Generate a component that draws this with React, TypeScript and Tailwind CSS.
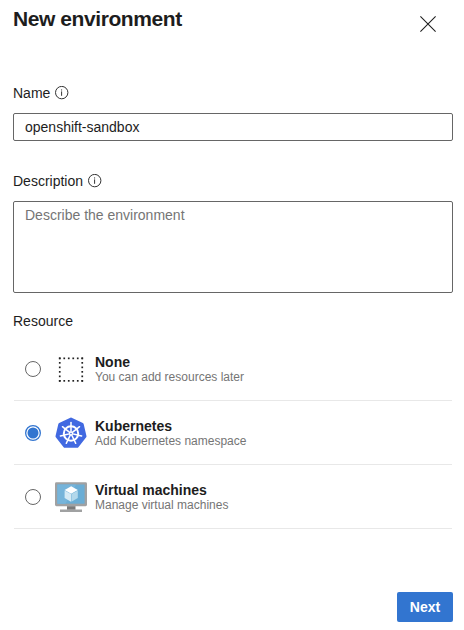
import React, { useState } from 'react';

function InfoIcon() {
  return (
    <svg className="ml-[5px] h-[14px] w-[14px]" viewBox="0 0 14 14" fill="none">
      <circle cx="6.7" cy="6.6" r="6.2" stroke="#333" strokeWidth="1" />
      <path d="M6.6 5.4v4.4" stroke="#333" strokeWidth="1" />
      <path d="M6.6 3.4v1.1" stroke="#333" strokeWidth="1" />
    </svg>
  );
}

function RadioMark({ checked }: { checked: boolean }) {
  return (
    <svg className="h-4 w-4" viewBox="0 0 16 16" fill="none">
      {checked ? (
        <>
          <circle cx="8" cy="8" r="7.35" stroke="#3275d0" strokeWidth="1.3" />
          <circle cx="8" cy="8" r="5.5" fill="#3275d0" />
        </>
      ) : (
        <circle cx="8" cy="8" r="7.5" stroke="#666" strokeWidth="1" />
      )}
    </svg>
  );
}

function NoneIcon() {
  return (
    <svg className="h-8 w-8" viewBox="0 0 32 32" fill="#222">
      {[0, 1, 2, 3, 4, 5].map((i) => {
        const p = 3.9 + i * 4.5;
        return (
          <g key={i}>
            <rect x={p} y="4.5" width="1.7" height="1.7" />
            <rect x={p} y="27" width="1.7" height="1.7" />
            <rect x="3.9" y={p + 0.6} width="1.7" height="1.7" />
            <rect x="26.4" y={p + 0.6} width="1.7" height="1.7" />
          </g>
        );
      })}
    </svg>
  );
}

function KubernetesIcon() {
  return (
    <svg className="h-8 w-8" viewBox="0 0 32 32" fill="none">
      <path
        d="M16 2 27.2 7.3 30 19.4 22.2 29.3H9.8L2 19.4 4.8 7.3Z"
        fill="#4169e1"
        stroke="#4169e1"
        strokeWidth="3"
        strokeLinejoin="round"
      />
      <g stroke="#fff" strokeLinecap="round">
        <circle cx="16" cy="16.5" r="7.2" strokeWidth="2" />
        {[0, 1, 2, 3, 4, 5, 6].map((i) => (
          <g key={i} transform={`rotate(${(i * 360) / 7} 16 16.5)`}>
            <path d="M16 16V9.5" strokeWidth="1.5" />
            <path d="M16 9V5.6" strokeWidth="1.5" />
          </g>
        ))}
      </g>
      <circle cx="16" cy="16.5" r="2" fill="#fff" />
      <circle cx="16" cy="16.5" r="0.8" fill="#4169e1" />
    </svg>
  );
}

function MachineIcon() {
  return (
    <svg className="h-8 w-8" viewBox="0 0 32 32">
      <rect x="0" y="1.2" width="32" height="24" rx="1.4" fill="#a0a1a2" />
      <rect x="2.4" y="3.5" width="27.2" height="19.2" fill="#6aadd5" />
      <path d="M2.4 3.5h18.7L10.5 22.7H2.4Z" fill="#76b4da" />
      <path d="M12 25.2h8.5v3.6H12Z" fill="#7a7a7a" />
      <path d="M5 28.5h22V31H5Z" fill="#a0a1a2" />
      <path d="m16.2 5.3 6.6 3.6-6.6 3.8-6.6-3.8Z" fill="#fff" />
      <path d="M9.6 9.4 16 13.1v7.6L9.6 17.1Z" fill="#d5eaf5" />
      <path d="M22.8 9.4 16.4 13.1v7.6l6.4-3.6Z" fill="#b3d8eb" />
    </svg>
  );
}

const resources = [
  { id: 'none', title: 'None', detail: 'You can add resources later', Icon: NoneIcon },
  { id: 'kubernetes', title: 'Kubernetes', detail: 'Add Kubernetes namespace', Icon: KubernetesIcon },
  { id: 'vm', title: 'Virtual machines', detail: 'Manage virtual machines', Icon: MachineIcon },
];

export default function App() {
  const [name, setName] = useState('openshift-sandbox');
  const [selected, setSelected] = useState('kubernetes');

  return (
    <main className="flex h-[630px] w-[464px] flex-col bg-white pr-[11px] pl-[13px] font-['Liberation_Sans',Arial,sans-serif] text-sm text-[#1d1d1d]">
      <header className="flex h-[83px] justify-between">
        <h1 className="pt-[5px] text-[21px] leading-7 font-bold tracking-[-0.02em]">New environment</h1>
        <button aria-label="Close" className="mt-4 mr-[17px] h-4 w-4">
          <svg viewBox="0 0 16 16" className="h-4 w-4" stroke="#1d1d1d" strokeWidth="1.05">
            <path d="m.4.4 15.2 15.2M15.6.4.4 15.6" />
          </svg>
        </button>
      </header>

      <label htmlFor="name" className="flex h-5 items-center">
        Name
        <InfoIcon />
      </label>
      <input
        id="name"
        value={name}
        onChange={(e) => setName(e.target.value)}
        className="mt-[10px] h-7 w-full shrink-0 rounded-[2px] border border-[#666] px-[11px] outline-none"
      />

      <label htmlFor="description" className="mt-[30px] flex h-5 items-center">
        Description
        <InfoIcon />
      </label>
      <textarea
        id="description"
        placeholder="Describe the environment"
        className="mt-[10px] h-[92px] w-full shrink-0 resize-none rounded-[2px] border border-[#666] px-[11px] pt-[3px] leading-5 outline-none placeholder:text-[#757575]"
      />

      <h2 className="mt-[18px] leading-5">Resource</h2>
      <div role="radiogroup" className="mx-px mt-[6px] flex flex-col">
        {resources.map(({ id, title, detail, Icon }) => (
          <div
            key={id}
            role="radio"
            aria-checked={selected === id}
            onClick={() => setSelected(id)}
            className="flex h-16 items-center border-b border-[#e8e8e8] pt-px pl-[11px]"
          >
            <RadioMark checked={selected === id} />
            <span className="ml-[14px]">
              <Icon />
            </span>
            <span className="ml-2 flex flex-col">
              <span className="leading-4 font-bold">{title}</span>
              <span className="text-xs leading-[14px] text-[#757575]">{detail}</span>
            </span>
          </div>
        ))}
      </div>

      <footer className="mt-[63px] flex justify-end">
        <button className="h-[30px] w-14 rounded-[2px] bg-[#3275d0] font-bold text-white">Next</button>
      </footer>
    </main>
  );
}
